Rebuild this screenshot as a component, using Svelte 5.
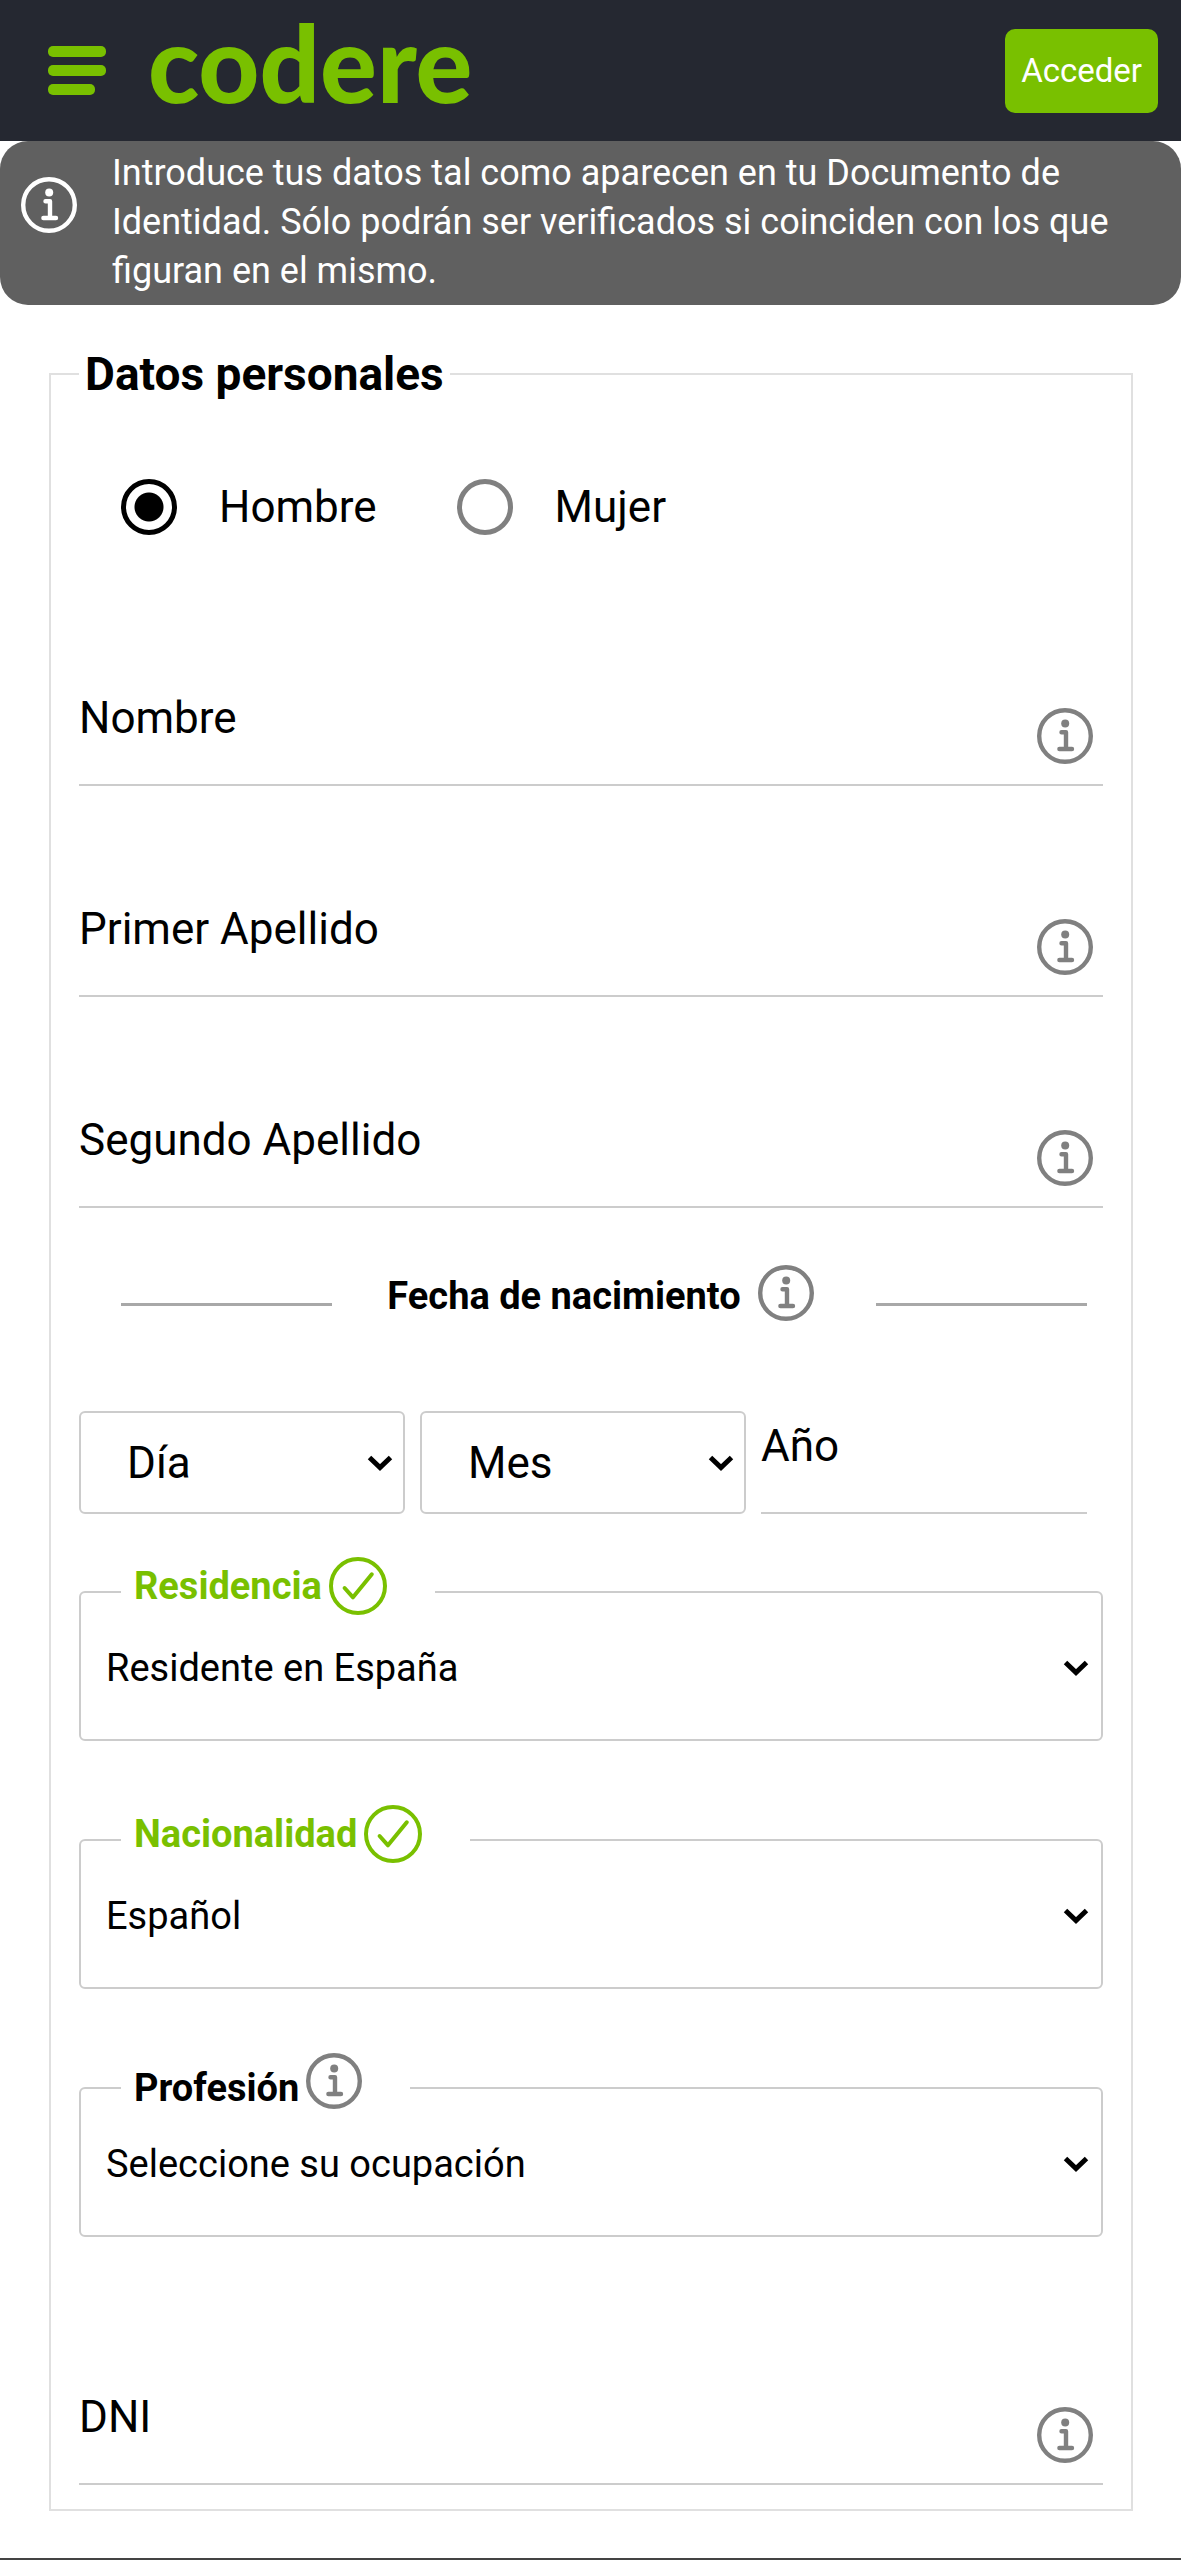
<script>
  let gender = "hombre";

  let form = {
    nombre: "",
    apellido1: "",
    apellido2: "",
    dia: "",
    mes: "",
    anyo: "",
    residencia: "es",
    nacionalidad: "es",
    profesion: "",
    dni: "",
  };

  const nameFields = [
    { id: "nombre", label: "Nombre" },
    { id: "apellido1", label: "Primer Apellido" },
    { id: "apellido2", label: "Segundo Apellido" },
  ];

  const selects = [
    { id: "residencia", label: "Residencia", valid: true, options: [{ value: "es", text: "Residente en España" }] },
    { id: "nacionalidad", label: "Nacionalidad", valid: true, options: [{ value: "es", text: "Español" }] },
    { id: "profesion", label: "Profesión", valid: false, options: [{ value: "", text: "Seleccione su ocupación" }] },
  ];

  const days = Array.from({ length: 31 }, (_, i) => i + 1);
  const months = Array.from({ length: 12 }, (_, i) => i + 1);
</script>

{#snippet infoIcon()}
  <svg class="icon" viewBox="0 0 56 56" aria-hidden="true">
    <circle cx="28" cy="28" r="25.8" />
    <path d="M24.5 24.2H29V41M22.4 41H35" />
    <circle class="dot" cx="28.2" cy="15.4" r="4" />
  </svg>
{/snippet}

{#snippet chevron()}
  <svg class="chevron" viewBox="0 0 26 16" aria-hidden="true">
    <path d="M2.5 2.5L13 12.5L23.5 2.5" />
  </svg>
{/snippet}

{#snippet textField(id, label)}
  <div class="field">
    <input {id} type="text" bind:value={form[id]} />
    <label for={id}>{label}</label>
    <button type="button" class="info" aria-label="Información">{@render infoIcon()}</button>
  </div>
{/snippet}

<header>
  <button class="menu" aria-label="Menú">
    <svg viewBox="0 0 58 50" aria-hidden="true">
      <rect width="58" height="11" rx="5" />
      <rect y="19" width="58" height="11" rx="5" />
      <rect y="38" width="47" height="11" rx="5" />
    </svg>
  </button>
  <a class="logo" href="#inicio">codere</a>
  <button class="login">Acceder</button>
</header>

<div class="notice">
  {@render infoIcon()}
  <p>
    Introduce tus datos tal como aparecen en tu Documento de Identidad. Sólo podrán ser
    verificados si coinciden con los que figuran en el mismo.
  </p>
</div>

<form>
  <fieldset class="personal">
    <legend>Datos personales</legend>

    <div class="gender">
      <label><input type="radio" name="gender" value="hombre" bind:group={gender} />Hombre</label>
      <label><input type="radio" name="gender" value="mujer" bind:group={gender} />Mujer</label>
    </div>

    <div class="names">
      {#each nameFields as f}
        {@render textField(f.id, f.label)}
      {/each}
    </div>

    <div class="birth-title">
      <span class="rule"></span>
      <h2>Fecha de nacimiento</h2>
      <button type="button" class="info" aria-label="Información">{@render infoIcon()}</button>
      <span class="rule"></span>
    </div>

    <div class="birth">
      <div class="select boxed">
        <select aria-label="Día" bind:value={form.dia}>
          <option value="">Día</option>
          {#each days as d}
            <option value={d}>{d}</option>
          {/each}
        </select>
        {@render chevron()}
      </div>
      <div class="select boxed">
        <select aria-label="Mes" bind:value={form.mes}>
          <option value="">Mes</option>
          {#each months as m}
            <option value={m}>{m}</option>
          {/each}
        </select>
        {@render chevron()}
      </div>
      <div class="field">
        <input id="anyo" type="text" inputmode="numeric" bind:value={form.anyo} />
        <label for="anyo">Año</label>
      </div>
    </div>

    <div class="groups">
      {#each selects as s}
        <fieldset class="group" class:valid={s.valid}>
          <legend>
            <label for={s.id}>{s.label}</label>
            {#if s.valid}
              <svg class="check" viewBox="0 0 58 58" aria-hidden="true">
                <circle cx="29" cy="29" r="27" />
                <path d="M15.6 31L24 40.3L42.8 17.3" />
              </svg>
            {:else}
              <button type="button" class="info" aria-label="Información">{@render infoIcon()}</button>
            {/if}
          </legend>
          <div class="select">
            <select id={s.id} bind:value={form[s.id]}>
              {#each s.options as o}
                <option value={o.value}>{o.text}</option>
              {/each}
            </select>
            {@render chevron()}
          </div>
        </fieldset>
      {/each}
    </div>

    {@render textField("dni", "DNI")}
  </fieldset>
</form>

<footer></footer>

<style>
  :global(body) {
    margin: 0;
    background: #fff;
    color: #000;
    font-family: Roboto, "Liberation Sans", sans-serif;
  }

  button,
  input,
  select {
    font: inherit;
    color: inherit;
    margin: 0;
    padding: 0;
    border: none;
    background: none;
    box-sizing: border-box;
  }

  button {
    cursor: pointer;
  }

  /* Cabecera */
  header {
    display: flex;
    align-items: center;
    height: 141px;
    padding: 0 23px 0 48px;
    background: #252831;
    box-sizing: border-box;
  }

  .menu {
    width: 58px;
    height: 50px;
    margin-right: 42px;
  }

  .menu svg {
    display: block;
    fill: #79c000;
  }

  .logo {
    align-self: flex-start;
    color: #79c000;
    font-family: Lato, sans-serif;
    font-size: 106px;
    font-weight: 900;
    line-height: 124px;
    text-decoration: none;
  }

  .login {
    height: 84px;
    margin-left: auto;
    padding: 0 16px;
    border-radius: 10px;
    background: #79c000;
    color: #fff;
    font-size: 33px;
  }

  /* Aviso */
  .notice {
    display: flex;
    align-items: flex-start;
    gap: 35px;
    padding: 8px 60px 9px 21px;
    border-radius: 28px;
    background: #606060;
    color: #fff;
  }

  .notice .icon {
    margin-top: 28px;
    color: #fff;
  }

  .notice p {
    margin: 0;
    font-size: 36px;
    line-height: 49px;
  }

  .icon {
    display: block;
    flex: none;
    width: 56px;
    height: 56px;
    color: #808080;
    fill: none;
    stroke: currentColor;
    stroke-width: 4.4;
    stroke-linecap: round;
    stroke-linejoin: round;
  }

  .icon .dot {
    fill: currentColor;
    stroke: none;
  }

  /* Formulario */
  .personal {
    margin: 43px 48px 47px 49px;
    padding: 0 28px 24px;
    border: 2px solid #e0e0e0;
    min-width: 0;
  }

  .personal > legend {
    padding: 0 6px;
    font-size: 46px;
    font-weight: 700;
    line-height: 52px;
  }

  .gender {
    display: flex;
    gap: 80px;
    padding: 79px 42px 0;
    font-size: 44px;
    line-height: 56px;
  }

  .gender label {
    display: flex;
    align-items: center;
    gap: 42px;
  }

  .gender input {
    appearance: none;
    width: 56px;
    height: 56px;
    border: 5px solid #808080;
    border-radius: 50%;
  }

  .gender input:checked {
    border-color: #000;
    background: radial-gradient(circle, #000 14px, transparent 15px);
  }

  .names {
    display: grid;
    gap: 111px;
    margin-top: 151px;
  }

  .field {
    display: grid;
    grid-template-columns: 1fr auto;
    height: 100px;
    font-size: 44px;
  }

  .field input {
    grid-area: 1 / 1 / 2 / 3;
    width: 100%;
    height: 100%;
    padding-top: 30px;
    border-bottom: 2px solid #ccc;
    outline: none;
  }

  .field label {
    grid-area: 1 / 1;
    line-height: 64px;
    pointer-events: none;
  }

  .field .info {
    grid-area: 1 / 2;
    align-self: end;
    margin: 0 10px 22px 0;
  }

  .birth-title {
    display: flex;
    align-items: flex-start;
    margin: 57px 16px 84px 42px;
  }

  .birth-title h2 {
    margin: 0 17px 0 55px;
    font-size: 38px;
    font-weight: 700;
    line-height: 62px;
  }

  .birth-title .info {
    margin-right: 62px;
  }

  .rule {
    flex: 1;
    align-self: center;
    margin-top: 16px;
    border-top: 3px solid #a8a8a8;
  }

  .birth {
    display: grid;
    grid-template-columns: repeat(3, 1fr);
    align-items: end;
    gap: 15px;
    margin-right: 16px;
    font-size: 44px;
  }

  .select {
    display: grid;
    align-items: center;
  }

  .select select {
    grid-area: 1 / 1;
    appearance: none;
    width: 100%;
    height: 82px;
    padding: 0 50px 0 25px;
  }

  .boxed select {
    height: 103px;
    padding-left: 46px;
    border: 2px solid #ccc;
    border-radius: 6px;
  }

  .chevron {
    grid-area: 1 / 1;
    justify-self: end;
    width: 26px;
    height: 16px;
    margin-right: 12px;
    fill: none;
    stroke: #000;
    stroke-width: 5;
    pointer-events: none;
  }

  .groups {
    display: grid;
    gap: 64px;
    margin: 43px 0 148px;
  }

  .group {
    min-width: 0;
    margin: 0;
    padding: 0 0 30px;
    border: 2px solid #ccc;
    border-radius: 6px;
    font-size: 38px;
  }

  .group legend {
    display: flex;
    align-items: flex-start;
    gap: 7px;
    height: 70px;
    margin-left: 40px;
    padding: 0 48px 0 13px;
    font-weight: 700;
    line-height: 70px;
  }

  .group.valid legend {
    color: #79c000;
    line-height: 58px;
  }

  .check {
    width: 58px;
    height: 58px;
    fill: none;
    stroke: #79c000;
    stroke-width: 4;
    stroke-linecap: round;
    stroke-linejoin: round;
  }

  footer {
    border-top: 2px solid #444;
  }
</style>
